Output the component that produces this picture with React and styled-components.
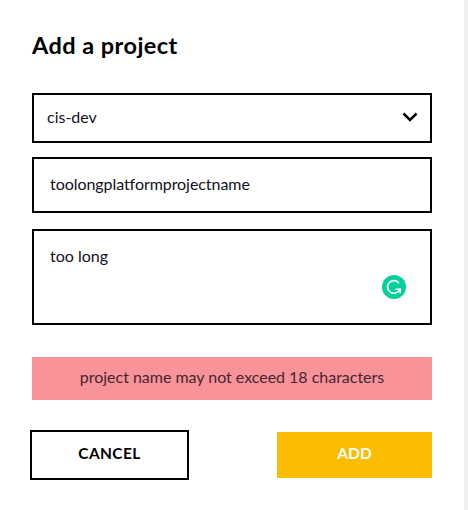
import React from "react";
import styled, { createGlobalStyle } from "styled-components";

const GlobalStyle = createGlobalStyle`
  * { box-sizing: border-box; }
  body {
    margin: 0;
    background: #f0f0f0;
    font-family: Lato, "Liberation Sans", sans-serif;
    font-size: 16px;
    font-variant-ligatures: none;
    color: #000;
  }
`;

const Panel = styled.form`
  width: 464px;
  height: 510px;
  padding: 29px 32px 30px;
  background: #fff;
  display: flex;
  flex-direction: column;
`;

const Title = styled.h2`
  margin: 0 0 32px;
  font-size: 23.5px;
  line-height: 32px;
  font-weight: 700;
`;

const Label = styled.span`
  display: inline-block;
  white-space: nowrap;
  letter-spacing: ${(p) => p.$tracking || "0"};
`;

const Field = styled.div`
  display: flex;
  align-items: ${(p) => (p.$multiline ? "flex-start" : "center")};
  justify-content: space-between;
  height: ${(p) => p.$height};
  margin-bottom: ${(p) => p.$gap};
  padding: ${(p) => p.$pad};
  border: 2px solid #000;
  line-height: 20px;
  color: #14101c;
`;

const Chevron = styled.svg`
  width: 16px;
  height: 10px;
`;

const Assistant = styled.svg`
  align-self: flex-end;
  width: 24px;
  height: 24px;
`;

const Alert = styled.div`
  display: flex;
  justify-content: center;
  height: 43px;
  margin-bottom: 30px;
  padding-top: 10px;
  line-height: 20px;
  background: #f8939a;
  color: #45252e;
`;

const Actions = styled.div`
  display: flex;
  align-items: center;
  justify-content: space-between;
  margin-left: -2px;
`;

const Button = styled.button`
  width: ${(p) => (p.$primary ? "155px" : "159px")};
  height: ${(p) => (p.$primary ? "46px" : "50px")};
  padding: 0 0 4px;
  border: ${(p) => (p.$primary ? "0" : "2px solid #000")};
  background: ${(p) => (p.$primary ? "#fcbd00" : "#fff")};
  color: ${(p) => (p.$primary ? "#fff" : "#000")};
  font: 700 15.5px/20px Lato, "Liberation Sans", sans-serif;
`;

export default function App() {
  return (
    <>
      <GlobalStyle />
      <Panel>
        <Title><Label $tracking="0.45px">Add a project</Label></Title>
        <Field $height="50px" $gap="14px" $pad="0 12px 2px 13px">
          <Label>cis-dev</Label>
          <Chevron viewBox="0 0 16 10" fill="none" stroke="#000" strokeWidth="2.5">
            <path d="M1.5 1.5 8 8 14.5 1.5" />
          </Chevron>
        </Field>
        <Field $height="56px" $gap="16px" $pad="0 16px 2px">
          <Label $tracking="-0.06px">toolongplatformprojectname</Label>
        </Field>
        <Field $height="96px" $gap="32px" $pad="15px 24px 24px 16px" $multiline>
          <Label>too long</Label>
          <Assistant viewBox="0 0 24 24" fill="none">
            <circle cx="12" cy="12" r="12" fill="#05d09d" />
            <path d="M16.9 8.2A6.3 6.3 0 1 0 17.8 14" stroke="#fff" strokeWidth="1.6" />
            <path d="M13.5 14.2H18.2V18.2" stroke="#fff" strokeWidth="1.6" />
          </Assistant>
        </Field>
        <Alert><Label $tracking="-0.02px">project name may not exceed 18 characters</Label></Alert>
        <Actions>
          <Button type="button"><Label $tracking="0.35px">CANCEL</Label></Button>
          <Button type="button" $primary><Label>ADD</Label></Button>
        </Actions>
      </Panel>
    </>
  );
}
